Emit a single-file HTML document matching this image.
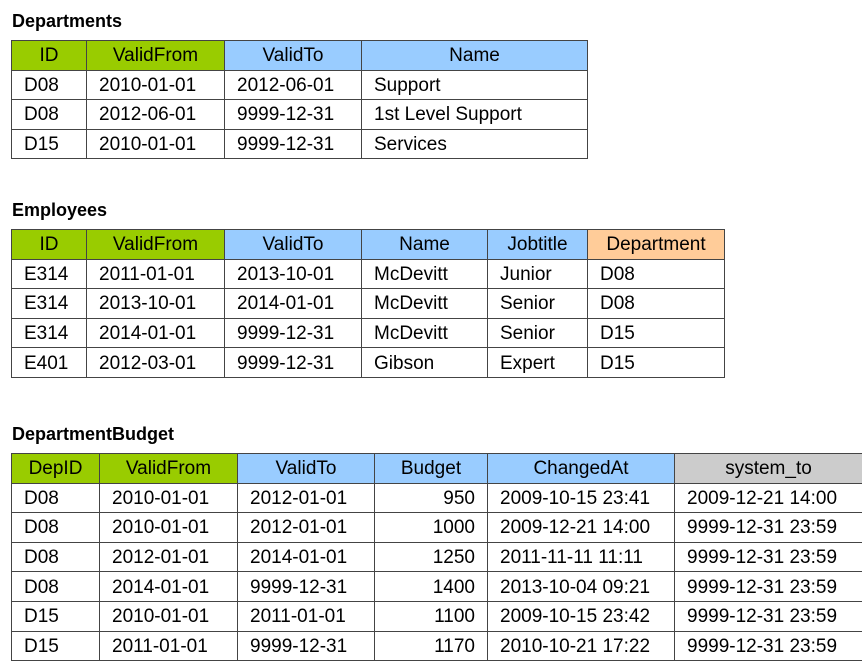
<!DOCTYPE html>
<html><head><style>
body{margin:0;width:862px;height:669px;background:#fff;font-family:"Liberation Sans",Arial,sans-serif;position:relative;overflow:hidden}
.t{position:absolute;font-weight:bold;font-size:18px;left:12px}
table{position:absolute;left:11px;border-collapse:collapse;font-size:19px;table-layout:fixed}
td{border:1px solid #444;padding:2px 0 0 12px;height:26.6px;white-space:nowrap;color:#000;line-height:20px;overflow:hidden}
tr.h td{text-align:center;padding:2px 0 0 0}
.g{background:#99cc00}.b{background:#99ccff}.o{background:#ffcc99}.y{background:#cccccc}
td.r{text-align:right;padding:2px 12px 0 0}
</style></head><body>
<div class="t" style="top:11px">Departments</div>
<table style="top:40px;width:577px">
<colgroup><col style="width:75px"><col style="width:138px"><col style="width:137px"><col style="width:226px"></colgroup>
<tr class="h"><td class="g">ID</td><td class="g">ValidFrom</td><td class="b">ValidTo</td><td class="b">Name</td></tr>
<tr><td>D08</td><td>2010-01-01</td><td>2012-06-01</td><td>Support</td></tr>
<tr><td>D08</td><td>2012-06-01</td><td>9999-12-31</td><td>1st Level Support</td></tr>
<tr><td>D15</td><td>2010-01-01</td><td>9999-12-31</td><td>Services</td></tr>
</table>
<div class="t" style="top:200px">Employees</div>
<table style="top:229px;width:714px">
<colgroup><col style="width:75px"><col style="width:138px"><col style="width:137px"><col style="width:126px"><col style="width:100px"><col style="width:137px"></colgroup>
<tr class="h"><td class="g">ID</td><td class="g">ValidFrom</td><td class="b">ValidTo</td><td class="b">Name</td><td class="b">Jobtitle</td><td class="o">Department</td></tr>
<tr><td>E314</td><td>2011-01-01</td><td>2013-10-01</td><td>McDevitt</td><td>Junior</td><td>D08</td></tr>
<tr><td>E314</td><td>2013-10-01</td><td>2014-01-01</td><td>McDevitt</td><td>Senior</td><td>D08</td></tr>
<tr><td>E314</td><td>2014-01-01</td><td>9999-12-31</td><td>McDevitt</td><td>Senior</td><td>D15</td></tr>
<tr><td>E401</td><td>2012-03-01</td><td>9999-12-31</td><td>Gibson</td><td>Expert</td><td>D15</td></tr>
</table>
<div class="t" style="top:424px">DepartmentBudget</div>
<table style="top:453px;width:851px">
<colgroup><col style="width:88px"><col style="width:138px"><col style="width:137px"><col style="width:113px"><col style="width:187px"><col style="width:188px"></colgroup>
<tr class="h"><td class="g">DepID</td><td class="g">ValidFrom</td><td class="b">ValidTo</td><td class="b">Budget</td><td class="b">ChangedAt</td><td class="y">system_to</td></tr>
<tr><td>D08</td><td>2010-01-01</td><td>2012-01-01</td><td class="r">950</td><td>2009-10-15 23:41</td><td>2009-12-21 14:00</td></tr>
<tr><td>D08</td><td>2010-01-01</td><td>2012-01-01</td><td class="r">1000</td><td>2009-12-21 14:00</td><td>9999-12-31 23:59</td></tr>
<tr><td>D08</td><td>2012-01-01</td><td>2014-01-01</td><td class="r">1250</td><td>2011-11-11 11:11</td><td>9999-12-31 23:59</td></tr>
<tr><td>D08</td><td>2014-01-01</td><td>9999-12-31</td><td class="r">1400</td><td>2013-10-04 09:21</td><td>9999-12-31 23:59</td></tr>
<tr><td>D15</td><td>2010-01-01</td><td>2011-01-01</td><td class="r">1100</td><td>2009-10-15 23:42</td><td>9999-12-31 23:59</td></tr>
<tr><td>D15</td><td>2011-01-01</td><td>9999-12-31</td><td class="r">1170</td><td>2010-10-21 17:22</td><td>9999-12-31 23:59</td></tr>
</table>
</body></html>
